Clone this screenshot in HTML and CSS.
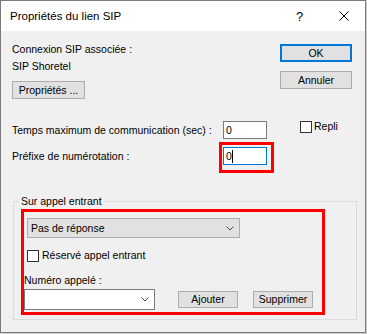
FILE: index.html
```html
<!DOCTYPE html>
<html lang="fr">
<head>
    <meta charset="UTF-8">
    <title>Propriétés du lien SIP</title>
    <link rel="stylesheet" href="styles.css">
</head>
<body>
    <div class="window">
        <div class="titlebar">
            <span class="title">Propriétés du lien SIP</span>
            <span class="help">?</span>
            <span class="close">
                <svg width="10" height="10" viewBox="0 0 10 10">
                    <path d="M0.5 0.5 L9.5 9.5 M9.5 0.5 L0.5 9.5" stroke="#000" stroke-width="1" fill="none"/>
                </svg>
            </span>
        </div>
        <div class="body">
            <div class="top">
                <div class="conn">
                    <div>Connexion SIP associée :</div>
                    <div class="conn-name">SIP Shoretel</div>
                    <button class="btn btn-props">Propriétés ...</button>
                </div>
                <div class="actions">
                    <button class="btn btn-ok">OK</button>
                    <button class="btn btn-cancel">Annuler</button>
                </div>
            </div>

            <div class="params">
                <div class="row">
                    <span class="lbl">Temps maximum de communication (sec) :</span>
                    <div class="txt">0</div>
                    <label class="check repli"><span class="box"></span>Repli</label>
                </div>
                <div class="row">
                    <span class="lbl">Préfixe de numérotation :</span>
                    <div class="field">
                        <div class="txt focused">0<span class="caret"></span></div>
                        <span class="mark mark-prefix"></span>
                    </div>
                </div>
            </div>

            <fieldset class="group">
                <legend>Sur appel entrant</legend>
                <div class="group-inner">
                    <div class="combo combo-action">
                        <span>Pas de réponse</span>
                        <svg class="chev" width="8" height="5" viewBox="0 0 8 5">
                            <path d="M0.5 0.5 L4 4 L7.5 0.5" stroke="#444" stroke-width="1" fill="none"/>
                        </svg>
                    </div>
                    <label class="check reserve"><span class="box"></span>Réservé appel entrant</label>
                    <div class="num-label">Numéro appelé :</div>
                    <div class="num-row">
                        <div class="combo combo-num">
                            <span></span>
                            <svg class="chev" width="8" height="5" viewBox="0 0 8 5">
                                <path d="M0.5 0.5 L4 4 L7.5 0.5" stroke="#444" stroke-width="1" fill="none"/>
                            </svg>
                        </div>
                        <button class="btn btn-add">Ajouter</button>
                        <button class="btn btn-del">Supprimer</button>
                    </div>
                    <span class="mark mark-group"></span>
                </div>
            </fieldset>
        </div>
    </div>
</body>
</html>
```
FILE: styles.css
```css
html, body {
    margin: 0;
    background: #cfcfcf;
}

body {
    font-family: "Liberation Sans", Arial, sans-serif;
    font-size: 10.5px;
    line-height: 13px;
    color: #000;
}

.window {
    width: 366px;
    height: 333px;
    box-sizing: border-box;
    border: 1px solid #7a7a7a;
    background: #f0f0f0;
    display: flex;
    flex-direction: column;
}

/* barre de titre */
.titlebar {
    height: 30px;
    background: #fff;
    display: flex;
    align-items: center;
    flex: none;
}

.title {
    padding-left: 9px;
    font-size: 11.5px;
}

.help {
    margin-left: auto;
    width: 8px;
    font-size: 13px;
}

.close {
    margin-left: 35px;
    margin-right: 16px;
    width: 10px;
    height: 10px;
}

.close svg {
    display: block;
}

/* contenu */
.body {
    padding: 0 13px 0 11px;
}

.top {
    display: flex;
    justify-content: space-between;
}

.conn {
    padding-top: 12px;
}

.conn-name {
    margin-top: 4px;
}

.actions {
    padding-top: 13px;
    display: flex;
    flex-direction: column;
    gap: 9px;
}

.btn {
    display: block;
    box-sizing: border-box;
    padding: 0;
    font-family: inherit;
    font-size: 10.5px;
    line-height: 13px;
    color: #000;
    background: #e1e1e1;
    border: 1px solid #adadad;
}

.btn-props {
    margin-top: 8px;
    width: 73px;
    height: 18px;
}

.btn-ok {
    width: 72px;
    height: 18px;
    border: 2px solid #0078d7;
}

.btn-cancel {
    width: 72px;
    height: 18px;
}

.params {
    margin-top: 22px;
}

.row {
    display: flex;
    align-items: center;
    height: 18px;
}

.row + .row {
    margin-top: 8px;
}

.lbl {
    width: 211px;
    flex: none;
}

.txt {
    width: 44px;
    height: 18px;
    box-sizing: border-box;
    border: 1px solid #7a7a7a;
    background: #fff;
    padding-left: 2px;
    line-height: 16px;
}

.txt.focused {
    border-color: #0078d7;
}

.caret {
    display: inline-block;
    width: 1px;
    height: 13px;
    background: #000;
    vertical-align: -3px;
}

.field {
    position: relative;
}

.check {
    display: flex;
    align-items: center;
    height: 13px;
}

.box {
    width: 12px;
    height: 12px;
    box-sizing: border-box;
    border: 1px solid #333;
    background: #fff;
    margin-right: 2px;
}

.repli {
    margin-left: 33px;
    align-self: flex-start;
    margin-top: -1px;
}

/* groupe */
.group {
    margin: 30px 0 0 1px;
    width: 344px;
    box-sizing: border-box;
    padding: 0 0 9px;
    border: 1px solid #dcdcdc;
    min-width: 0;
}

.group legend {
    padding: 0 2px;
    margin-left: 5px;
    line-height: 13px;
}

.group-inner {
    position: relative;
    padding-top: 10px;
}

.combo {
    display: flex;
    align-items: center;
    justify-content: space-between;
    box-sizing: border-box;
}

.chev {
    display: block;
}

.combo-action {
    margin-left: 13px;
    width: 213px;
    height: 20px;
    background: #e1e1e1;
    border: 1px solid #adadad;
    padding: 0 5px 0 3px;
}

.reserve {
    margin: 11px 0 0 13px;
}

.reserve .box {
    margin-right: 3px;
}

.num-label {
    margin: 12px 0 0 10px;
}

.num-row {
    display: flex;
    align-items: center;
    margin: 2px 0 0 10px;
}

.combo-num {
    width: 131px;
    height: 21px;
    background: #fff;
    border: 1px solid #7a7a7a;
    padding: 0 5px 0 3px;
}

.btn-add {
    margin-left: 23px;
    width: 60px;
    height: 17px;
}

.btn-del {
    margin-left: 15px;
    width: 60px;
    height: 17px;
}

/* cadres rouges d'annotation */
.mark {
    position: absolute;
    box-sizing: border-box;
    border: 3px solid #ff0000;
}

.mark-prefix {
    left: -4px;
    top: -5px;
    width: 55px;
    height: 31px;
}

.mark-group {
    left: 7px;
    top: 1px;
    width: 304px;
    height: 106px;
}
```
